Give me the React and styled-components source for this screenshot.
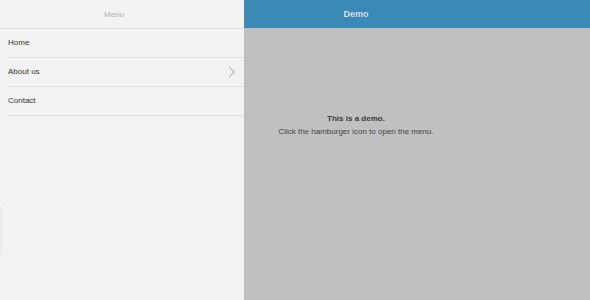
import React from 'react'
import styled, { createGlobalStyle } from 'styled-components'

const Global = createGlobalStyle`
  html, body {
    margin: 0;
    padding: 0;
    height: 100%;
  }
  body {
    font-family: "Liberation Sans", Arial, sans-serif;
    font-size: 8px;
    overflow: hidden;
  }
  #root {
    height: 100%;
  }
`

const Page = styled.div`
  display: flex;
  width: 590px;
  height: 300px;
`

const Menu = styled.nav`
  position: relative;
  width: 244px;
  flex: none;
  background: #f3f3f3;
  display: flex;
  flex-direction: column;
`

const MenuHeader = styled.div`
  height: 28px;
  border-bottom: 1px solid #e0e0e0;
  display: flex;
  align-items: center;
  justify-content: center;
  padding-right: 16px;
  color: #b0b0b0;
  font-size: 8px;
`

const List = styled.ul`
  list-style: none;
  margin: 0;
  padding: 0 0 0 8px;
`

const Item = styled.li`
  height: 28px;
  border-bottom: 1px solid #e0e0e0;
  display: flex;
  align-items: center;
  justify-content: space-between;
  padding-right: 9px;
  padding-bottom: 1px;
  box-sizing: content-box;
  height: 27px;
  color: #333;
  font-size: 8px;
`

const Chevron = styled.svg`
  width: 6px;
  height: 10px;
  margin-top: 1px;
`

const EdgeShadow = styled.div`
  position: absolute;
  left: 0;
  top: 206px;
  width: 3px;
  height: 48px;
  background: linear-gradient(to right, rgba(0, 0, 0, 0.05), rgba(0, 0, 0, 0));
`

const Main = styled.main`
  flex: 1;
  display: flex;
  flex-direction: column;
  background: #c0c0c0;
`

const TopBar = styled.header`
  height: 28px;
  background: #3a89b7;
  display: flex;
  align-items: center;
  justify-content: center;
  padding-right: 122px;
  color: #d9dfe4;
  font-size: 9px;
  font-weight: bold;
`

const Content = styled.div`
  padding: 84px 122px 0 0;
  text-align: center;
  color: #444;
  line-height: 13px;
`

const Title = styled.div`
  font-weight: bold;
  color: #3a3a3a;
`

export default function App() {
  return (
    <Page>
      <Global />
      <Menu>
        <MenuHeader>Menu</MenuHeader>
        <List>
          <Item>Home</Item>
          <Item>
            About us
            <Chevron viewBox="0 0 6 10">
              <polyline points="0.5,0.5 5,5 0.5,9.5" fill="none" stroke="#999" strokeWidth="1" />
            </Chevron>
          </Item>
          <Item>Contact</Item>
        </List>
        <EdgeShadow />
      </Menu>
      <Main>
        <TopBar>Demo</TopBar>
        <Content>
          <Title>This is a demo.</Title>
          <div>Click the hamburger icon to open the menu.</div>
        </Content>
      </Main>
    </Page>
  )
}
